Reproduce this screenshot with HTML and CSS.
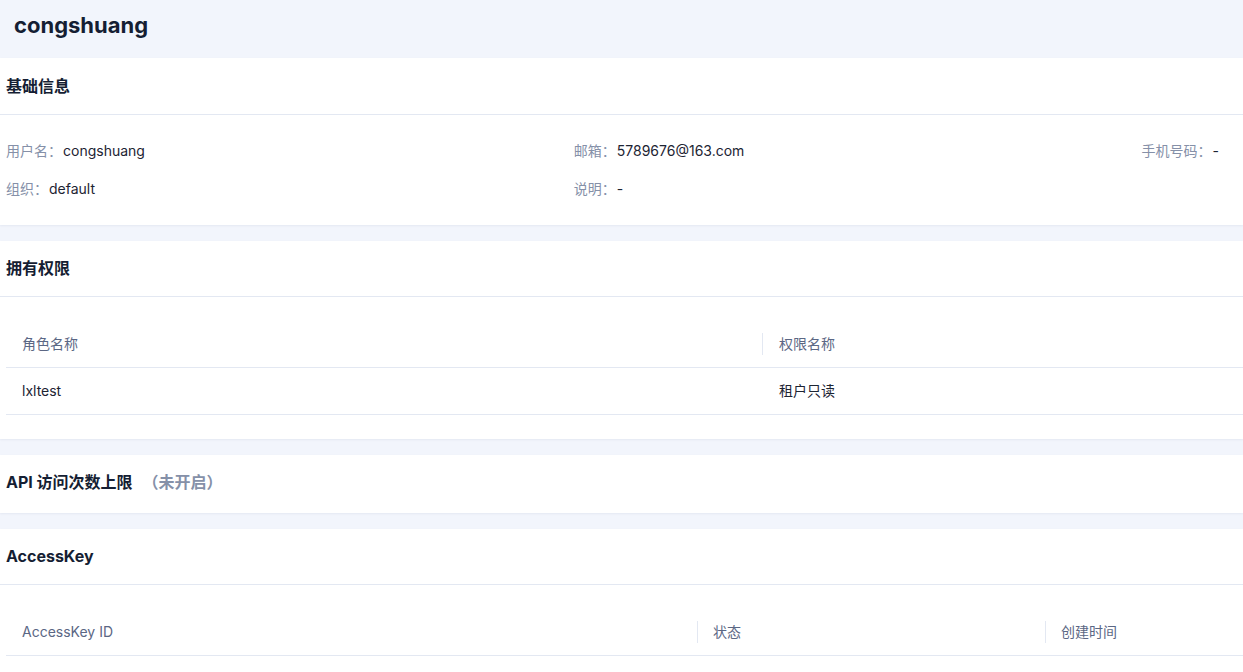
FILE: index.html
```html
<!DOCTYPE html>
<html lang="zh-CN">
<head>
<meta charset="utf-8">
<title>congshuang</title>
<link rel="stylesheet" href="styles.css">
</head>
<body>
<div class="page">
  <header class="page-header">
    <h1 class="page-title">congshuang</h1>
  </header>

  <section class="card card-basic">
    <h2 class="card-title">基础信息</h2>
    <div class="info-grid">
      <div class="info-item"><span class="info-label">用户名：</span><span class="info-value">congshuang</span></div>
      <div class="info-item"><span class="info-label">邮箱：</span><span class="info-value">5789676@163.com</span></div>
      <div class="info-item"><span class="info-label">手机号码：</span><span class="info-value">-</span></div>
      <div class="info-item"><span class="info-label">组织：</span><span class="info-value">default</span></div>
      <div class="info-item"><span class="info-label">说明：</span><span class="info-value">-</span></div>
    </div>
  </section>

  <section class="card">
    <h2 class="card-title">拥有权限</h2>
    <div class="table-wrap">
      <div class="table table-perm">
        <div class="row row-head">
          <div class="cell">角色名称</div>
          <div class="cell cell-sep">权限名称</div>
        </div>
        <div class="row">
          <div class="cell">lxltest</div>
          <div class="cell">租户只读</div>
        </div>
      </div>
    </div>
  </section>

  <section class="card card-api">
    <h2 class="card-title card-title-plain">API 访问次数上限<span class="title-note">（未开启）</span></h2>
  </section>

  <section class="card">
    <h2 class="card-title">AccessKey</h2>
    <div class="table-wrap">
      <div class="table table-ak">
        <div class="row row-head">
          <div class="cell">AccessKey ID</div>
          <div class="cell cell-sep">状态</div>
          <div class="cell cell-sep">创建时间</div>
        </div>
      </div>
    </div>
  </section>
</div>
</body>
</html>
```
FILE: styles.css
```css
* { box-sizing: border-box; margin: 0; padding: 0; }

html, body {
  background: #f2f5fc;
}

body {
  font-family: "Inter", "Noto Sans CJK SC", "Liberation Sans", sans-serif;
  font-size: 14px;
  color: #1d2433;
  width: 1243px;
  overflow: hidden;
}

.page-header {
  height: 58px;
  padding: 10px 14px 0;
  background: #f2f5fc;
}

.page-title {
  font-size: 22px;
  line-height: 30px;
  font-weight: 700;
  color: #151e33;
}

.card {
  background: #fff;
  margin-bottom: 16px;
  box-shadow: 0 1px 2px rgba(20, 40, 90, 0.06);
}

.card-title {
  height: 56px;
  line-height: 55px;
  padding-left: 6px;
  font-size: 16px;
  font-weight: 700;
  color: #151e33;
  border-bottom: 1px solid #e3e8f2;
}

.card-basic .card-title {
  height: 57px;
  line-height: 56px;
}

.card-title-plain {
  border-bottom: none;
  height: 58px;
}

.title-note {
  margin-left: 10px;
  color: #8590a8;
  font-weight: 600;
}

.info-grid {
  display: grid;
  grid-template-columns: 1fr 1fr auto;
  row-gap: 16px;
  padding: 25px 24px 25px 6px;
  line-height: 22px;
}

.info-label {
  color: #8590a8;
}

.info-value {
  color: #1d2433;
  margin-left: 1px;
}

.table-wrap {
  padding: 24px 0 24px 6px;
}

.row {
  display: grid;
  height: 47px;
  align-items: center;
  border-bottom: 1px solid #e3e8f2;
}

.table-perm .row {
  grid-template-columns: 756px 1fr;
}

.table-ak .row {
  grid-template-columns: 691px 348px 1fr;
}

.cell {
  position: relative;
  padding-left: 16px;
  line-height: 22px;
  color: #1d2433;
}

.row-head .cell {
  color: #5b6784;
}

.cell-sep::before {
  content: "";
  position: absolute;
  left: 0;
  top: 0;
  bottom: 0;
  width: 1px;
  background: #e3e8f2;
}

.table-perm .cell-sep,
.table-perm .row .cell:nth-child(2) {
  padding-left: 17px;
}
```
